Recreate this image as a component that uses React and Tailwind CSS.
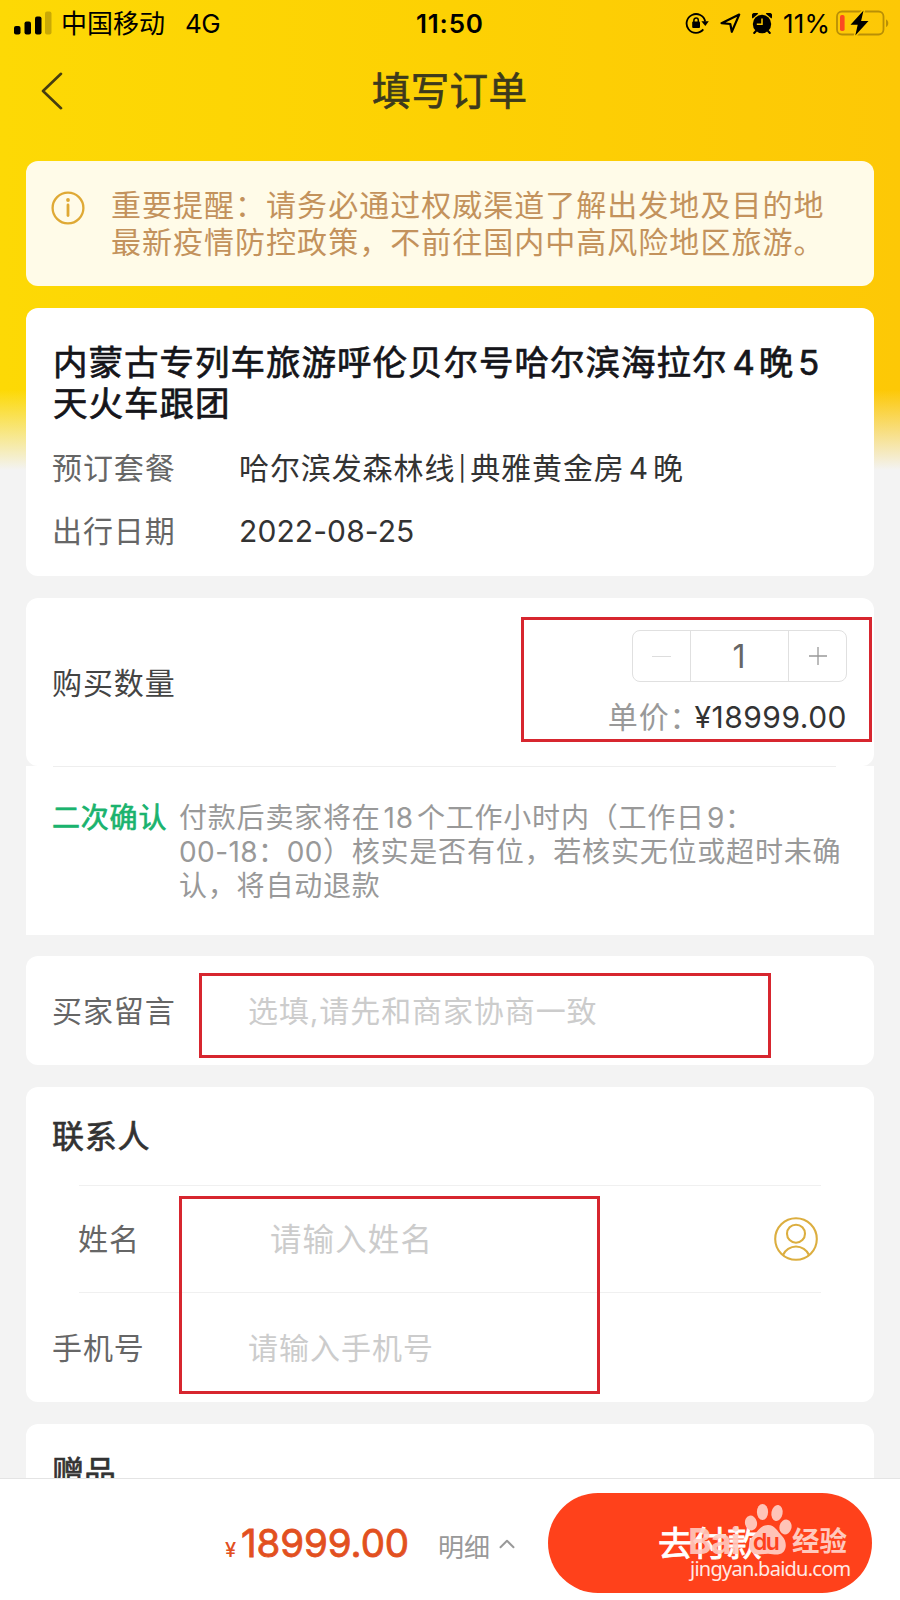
import { ChevronUp } from "lucide-react";

function SignalIcon() {
  return (
    <svg width="38" height="24" viewBox="0 0 38 24">
      <rect x="0" y="15" width="6.5" height="8.5" rx="2" fill="#000" />
      <rect x="10.5" y="10.5" width="6.5" height="13" rx="2" fill="#000" />
      <rect x="21" y="5.5" width="6.5" height="18" rx="2" fill="#000" />
      <rect x="31" y="0.5" width="6.5" height="23" rx="2" fill="#c9a905" />
    </svg>
  );
}

function BackIcon() {
  return (
    <svg width="22" height="38" viewBox="0 0 22 38" fill="none" stroke="#463d10" strokeWidth="2.6" strokeLinecap="round" strokeLinejoin="round">
      <path d="M20 1.8 2 19l18 17.2" />
    </svg>
  );
}

function RotationLockIcon() {
  return (
    <svg width="24" height="22" viewBox="0 0 24 22" fill="none" stroke="#000" strokeWidth="1.8">
      <path d="M18.3 17.4A9.4 9.4 0 1 1 20.2 9.5" />
      <path d="M16.4 9.3h7.4l-3.5 4.8z" fill="#000" stroke="none" />
      <rect x="7.2" y="9.5" width="7.8" height="6.5" rx="1" fill="#000" stroke="none" />
      <path d="M8.9 10V8.2a2.2 2.2 0 0 1 4.4 0V10" strokeWidth="1.5" />
    </svg>
  );
}

function LocationIcon() {
  return (
    <svg width="21" height="21" viewBox="0 0 21 21" fill="none" stroke="#000" strokeWidth="2.2" strokeLinejoin="round">
      <path d="M1.5 10.2 19.2 1.6 11.8 18.8 10.3 11z" />
    </svg>
  );
}

function AlarmIcon() {
  return (
    <svg width="20" height="21" viewBox="0 0 20 21">
      <circle cx="10" cy="11" r="9.2" fill="#000" />
      <path d="M0.6 5.4A3.6 3.6 0 0 1 6.2 0.8zM19.4 5.4A3.6 3.6 0 0 0 13.8 0.8z" fill="#000" />
      <path d="M4 18 2.2 20M16 18l1.8 2" stroke="#000" strokeWidth="2" strokeLinecap="round" />
      <path d="M10 5.5V11.3H4.8" fill="none" stroke="#fecb04" strokeWidth="1.5" />
    </svg>
  );
}

function BatteryIcon() {
  return (
    <svg width="54" height="26" viewBox="0 0 54 26">
      <rect x="1" y="1.5" width="46.5" height="23" rx="5" fill="none" stroke="#b98f06" strokeWidth="1.8" />
      <path d="M50 9.5c3 1 3 6.5 0 7.5z" fill="#b98f06" />
      <rect x="4" y="5" width="4.6" height="16" rx="1.8" fill="#fb4a22" />
      <path d="M27.5 0.5 14.5 14.7h7.2L19.3 25.5 32.5 11h-7.4z" fill="#000" stroke="#fecb04" strokeWidth="3" paintOrder="stroke" />
    </svg>
  );
}

function InfoIcon() {
  return (
    <svg width="34" height="34" viewBox="0 0 34 34" fill="none" stroke="#dfa935">
      <circle cx="17" cy="17" r="15.4" strokeWidth="2.3" />
      <path d="M17 14v10.5" strokeWidth="2.8" strokeLinecap="round" />
      <circle cx="17" cy="9" r="1.9" fill="#dfa935" stroke="none" />
    </svg>
  );
}

function ContactIcon() {
  return (
    <svg width="44" height="44" viewBox="0 0 44 44" fill="none" stroke="#dcae3f" strokeWidth="2.1">
      <circle cx="22" cy="22" r="20.8" />
      <circle cx="22" cy="16.7" r="9" />
      <path d="M9 38c2-5 7.500-8.500 13-8.500s11 3.500 13 8.500" />
    </svg>
  );
}

function StatusBar() {
  return (
    <div className="flex h-[46px] items-center text-[26px] text-black">
      <div className="flex w-[416px] items-center pl-[14px]">
        <SignalIcon />
        <span className="ml-[9px]">中国移动</span>
        <span className="ml-5 tracking-tight">4G</span>
      </div>
      <span className="w-[269px] pt-[1px] text-[26px] font-semibold tracking-[0.8px]">11:50</span>
      <RotationLockIcon />
      <span className="ml-[11px]"><LocationIcon /></span>
      <span className="ml-[11px]"><AlarmIcon /></span>
      <span className="ml-[11px] w-[53px] tracking-[0.2px]">11%</span>
      <BatteryIcon />
    </div>
  );
}

// red frame that points out a part of the form
function Highlight({ className }) {
  return <div className={`absolute border-[3.5px] border-[#d7262f] ${className}`} />;
}

function Watermark() {
  return (
    <div className="absolute left-[141px] top-[10px] h-[82px] w-[170px] text-[#ffc9be]">
      <span className="absolute left-[-1px] top-[18px] text-[36px] font-bold leading-[40px] tracking-[-1px] opacity-90">Bai</span>
      <svg className="absolute left-[54px] top-0" width="50" height="54" viewBox="0 0 50 54" fill="#ffc4b8">
        <ellipse cx="8" cy="20" rx="6" ry="7.5" transform="rotate(-12 8 20)" />
        <ellipse cx="19.5" cy="9" rx="5.6" ry="8" />
        <ellipse cx="34" cy="10" rx="5.6" ry="8" transform="rotate(10 34 10)" />
        <ellipse cx="42.5" cy="24" rx="6" ry="7.5" transform="rotate(14 42.5 24)" />
        <path d="M25 22c7 0 9 6 14 11 6 6 5 18-4 18.500-4 .3-6-.8-10-.8s-7 1.200-11 .8C5 51 4 39 10 33c5-5 8-11 15-11z" />
      </svg>
      <span className="absolute left-[64px] top-[23px] text-[23px] font-semibold leading-[32px] tracking-[-1.5px] text-[#ff411b]">du</span>
      <span className="absolute left-[103px] top-[22px] text-[27.5px] font-bold leading-[32px]">经验</span>
      <span className="absolute left-[1px] top-[52px] font-['Noto_Sans'] text-[20px] leading-[28px] tracking-[-0.75px] text-[#ffe9e4]">jingyan.baidu.com</span>
    </div>
  );
}

function TripCard() {
  return (
    <section className="mt-[22px] h-[268px] rounded-xl bg-white px-[27px] pt-[34px] text-[30px] tracking-[0.9px]">
      <h2 className="whitespace-nowrap text-[34.5px] leading-[41px] tracking-[1px] text-[#15151a] [-webkit-text-stroke:0.7px]">
        内蒙古专列车旅游呼伦贝尔号哈尔滨海拉尔<span className="ml-[5px] mr-[3px]">4</span>晚<span className="ml-[4px]">5</span>
        <br />
        天火车跟团
      </h2>
      <div className="mt-[19px] flex h-[50px] items-center">
        <span className="-ml-px w-[187px] text-[#666]">预订套餐</span>
        <span className="whitespace-nowrap text-[#333]">
          哈尔滨发森林线<span className="mx-[3px] align-[2px] text-[24px]">|</span>典雅黄金房<span className="mx-1">4</span>晚
        </span>
      </div>
      <div className="mt-[13px] flex h-[50px] items-center">
        <span className="-ml-px w-[187px] text-[#666]">出行日期</span>
        <span className="tracking-[0.1px] text-[#333]">2022-08-25</span>
      </div>
    </section>
  );
}

function QuantityCard() {
  return (
    <section className="mt-[22px]">
      <div className="relative flex h-[168px] items-center justify-between rounded-xl bg-white px-[27px] text-[30px] tracking-[0.9px]">
        <span className="-ml-px pt-[2px] text-[#444]">购买数量</span>
        <div className="flex flex-col items-end pt-[5px]">
          <div className="flex h-[52px] w-[215px] rounded-lg border border-[#e0e0e0] text-[#666]">
            <button className="flex w-[58px] items-center justify-center border-r border-[#e0e0e0]">
              <span className="h-px w-[19px] bg-[#ddd]" />
            </button>
            <span className="flex flex-1 items-center justify-center pt-[1px] text-[32px]">1</span>
            <button className="flex w-[58px] items-center justify-center border-l border-[#e0e0e0]">
              <svg width="18" height="18" viewBox="0 0 18 18" stroke="#999" strokeWidth="1.3">
                <path d="M9 0v18M0 9h18" />
              </svg>
            </button>
          </div>
          <div className="mt-[13px] flex h-[44px] items-center whitespace-nowrap">
            <span className="text-[#999]">单价：</span>
            <span className="-ml-[6px] tracking-[0.5px] text-[#333]">¥18999.00</span>
          </div>
        </div>
        <Highlight className="left-[495px] top-[19px] h-[125px] w-[351px]" />
      </div>
      <div className="h-[169px] bg-white">
        <div className="ml-[27px] mr-[38px] h-px bg-[#eee]" />
        <div className="flex whitespace-nowrap pl-[26px] pt-[34px] text-[28px] leading-[34px] tracking-[0.8px]">
          <span className="w-[127px] text-[#1ab36e] [-webkit-text-stroke:0.7px]">二次确认</span>
          <p className="text-[#999]">
            付款后卖家将在<span className="mx-[3px]">18</span>个工作小时内（工作日<span className="ml-[2px]">9</span>：
            <br />
            <span className="tracking-[0.4px]">00-18</span>：<span className="tracking-[0.4px]">00</span>）核实是否有位，若核实无位或超时未确
            <br />
            认，将自动退款
          </p>
        </div>
      </div>
    </section>
  );
}

function MessageCard() {
  return (
    <section className="relative mt-[21px] flex h-[109px] items-center rounded-xl bg-white pl-[26px] pt-[1px] text-[30px] tracking-[0.9px]">
      <span className="w-[196px] text-[#666]">买家留言</span>
      <span className="text-[#ccc]">选填,请先和商家协商一致</span>
      <Highlight className="left-[173px] top-[17px] h-[85px] w-[572px]" />
    </section>
  );
}

function ContactCard() {
  return (
    <section className="relative mt-[22px] h-[315px] rounded-xl bg-white text-[30px] tracking-[0.9px]">
      <h3 className="flex h-[98px] items-center pl-[26px] pt-[1px] text-[32px] tracking-[0.7px] text-[#333] [-webkit-text-stroke:0.7px]">联系人</h3>
      <div className="mx-[53px] flex h-[108px] items-center border-y border-[#f0f0f0]">
        <span className="-ml-px w-[192px] text-[#666]">姓名</span>
        <span className="flex-1 pt-[2px] text-[31.5px] tracking-[1.1px] text-[#ccc]">请输入姓名</span>
        <span className="mr-[3px]"><ContactIcon /></span>
      </div>
      <div className="flex h-[109px] items-center pl-[26px] pt-[1px]">
        <span className="w-[196px] text-[#666]">手机号</span>
        <span className="tracking-[1px] text-[#ccc]">请输入手机号</span>
      </div>
      <Highlight className="left-[153px] top-[109px] h-[198px] w-[421px]" />
    </section>
  );
}

function PayBar() {
  return (
    <footer className="relative flex h-[122px] items-center border-t border-[#e4e4e4] bg-white">
      <div className="flex w-[548px] items-baseline pl-[225px] pt-[8px]">
        <span className="w-[16px] text-[20px] font-medium text-[#e2501f]">¥</span>
        <span className="w-[197px] text-[38.5px] tracking-[-0.1px] text-[#e2501f] [-webkit-text-stroke:0.8px]">18999.00</span>
        <span className="whitespace-nowrap text-[26px] text-[#999]">明细</span>
        <ChevronUp className="ml-[4px] shrink-0" size={26} color="#999" strokeWidth={1.8} />
      </div>
      <div className="relative mt-[7px] flex h-[100px] w-[324px] items-center rounded-full bg-[#ff411b] pl-[110px] pt-[2px] text-[34.5px] text-white">
        <span className="[-webkit-text-stroke:0.8px]">去付款</span>
        <Watermark />
      </div>
    </footer>
  );
}

export default function App() {
  return (
    <div className="flex h-[1600px] w-[900px] flex-col overflow-hidden bg-[#f3f3f3] font-[Inter,'Noto_Sans_CJK_SC',sans-serif]">
      <div className="h-[1478px] shrink-0 overflow-hidden bg-[linear-gradient(to_bottom,transparent_390px,#f3f3f3_470px),linear-gradient(to_right,#fdd905,#fdd103_50%,#fdc806)]">
        <StatusBar />
        <header className="flex h-[90px] items-center pl-[41px]">
          <BackIcon />
          <h1 className="ml-[309px] pt-[2px] text-[38.5px] tracking-[0.3px] text-[#3d3a1c] [-webkit-text-stroke:0.7px]">填写订单</h1>
        </header>
        <main className="px-[26px] pt-[25px]">
          <section className="flex h-[125px] rounded-xl bg-[#fffbe8] pl-[25px] pt-[26px]">
            <span className="mt-[4px]"><InfoIcon /></span>
            <p className="ml-[26px] whitespace-nowrap text-[30px] leading-[36.5px] tracking-[1.02px] text-[#c3925c]">
              重要提醒：请务必通过权威渠道了解出发地及目的地
              <br />
              最新疫情防控政策，不前往国内中高风险地区旅游。
            </p>
          </section>
          <TripCard />
          <QuantityCard />
          <MessageCard />
          <ContactCard />
          <section className="mt-[22px] h-[120px] rounded-t-xl bg-white">
            <h3 className="flex h-[98px] items-center pl-[26px] text-[32px] text-[#333] [-webkit-text-stroke:0.7px]">赠品</h3>
          </section>
        </main>
      </div>
      <PayBar />
    </div>
  );
}
